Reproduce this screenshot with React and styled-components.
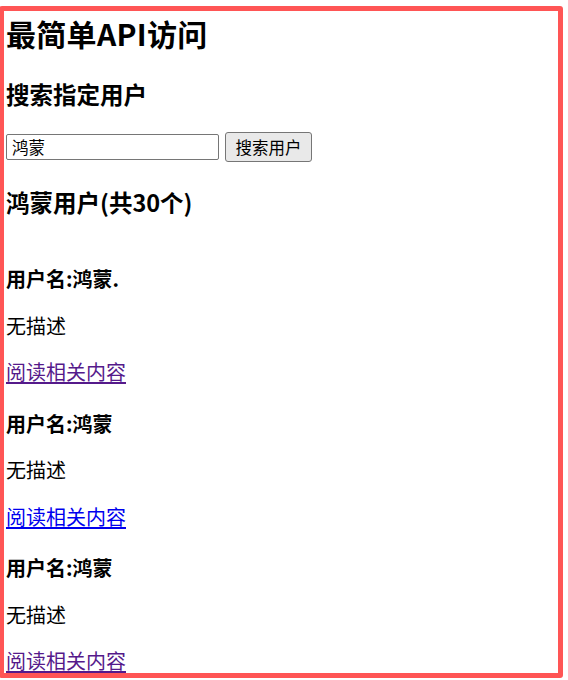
import React from "react";
import styled, { createGlobalStyle } from "styled-components";

const Global = createGlobalStyle`
  html, body { margin: 0; padding: 0; background: #fff; }
  body {
    font-family: "Noto Sans CJK SC", "Microsoft YaHei", sans-serif;
    color: #000;
    overflow: hidden;
  }
`;

const Page = styled.div`
  position: relative;
  height: 680px;
  padding: 15px 0 0 6px;
  box-sizing: border-box;
  display: flex;
  flex-direction: column;
  align-items: flex-start;
`;

const Title = styled.h1`
  margin: 0;
  font-size: 30px;
  line-height: 36px;
  font-weight: 700;
  letter-spacing: 0.3px;
`;

const Heading = styled.h3`
  margin: ${(p) => p.$top}px 0 0;
  font-size: 23.5px;
  line-height: 28px;
  font-weight: 700;
`;

const SearchRow = styled.form`
  margin: 24px 0 0;
  display: flex;
  align-items: center;
  gap: 6px;
  height: 30px;
`;

const Input = styled.input`
  box-sizing: border-box;
  width: 213px;
  height: 26px;
  padding: 0 5px;
  border: 1px solid #767676;
  border-radius: 2px;
  font-family: inherit;
  font-size: 16.5px;
  color: #000;
  background: #fff;
  outline: none;
`;

const Button = styled.button`
  box-sizing: border-box;
  width: 87px;
  height: 30px;
  padding: 0;
  border: 1px solid #767676;
  border-radius: 3px;
  background: #e9e9e9;
  font-family: inherit;
  font-size: 16.5px;
  color: #000;
`;

const List = styled.div`
  margin-top: 51px;
  display: flex;
  flex-direction: column;
  gap: 27.5px;
`;

const Item = styled.div`
  display: flex;
  flex-direction: column;
  align-items: flex-start;
  gap: 22.5px;
`;

const UserName = styled.h4`
  margin: 0;
  font-size: 20px;
  line-height: 24px;
  font-weight: 700;
`;

const Desc = styled.p`
  margin: 0;
  font-size: 20px;
  line-height: 24px;
`;

const ReadLink = styled.a`
  font-size: 20px;
  line-height: 24px;
  color: ${(p) => (p.$visited ? "#551a8b" : "#0000ee")};
  text-decoration: underline;
  text-underline-offset: 2px;
`;

const Frame = styled.div`
  position: absolute;
  left: -1px;
  top: 6px;
  width: 564px;
  height: 672px;
  box-sizing: border-box;
  border: 5px solid #ff5555;
  border-radius: 3px;
  pointer-events: none;
`;

const users = [
  { name: "鸿蒙.", visited: true },
  { name: "鸿蒙", visited: false },
  { name: "鸿蒙", visited: true },
];

export default function App() {
  return (
    <>
      <Global />
      <Page>
        <Title>最简单API访问</Title>
        <Heading $top={29}>搜索指定用户</Heading>
        <SearchRow onSubmit={(e) => e.preventDefault()}>
          <Input defaultValue="鸿蒙" />
          <Button type="submit">搜索用户</Button>
        </SearchRow>
        <Heading $top={26}>鸿蒙用户(共30个)</Heading>
        <List>
          {users.map((u, i) => (
            <Item key={i}>
              <UserName>用户名:{u.name}</UserName>
              <Desc>无描述</Desc>
              <ReadLink href="#" $visited={u.visited}>
                阅读相关内容
              </ReadLink>
            </Item>
          ))}
        </List>
        <Frame />
      </Page>
    </>
  );
}
